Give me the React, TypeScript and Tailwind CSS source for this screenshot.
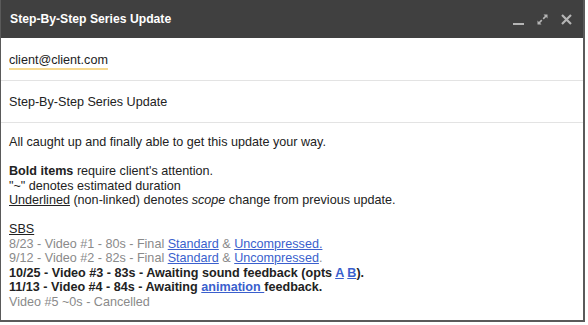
const Link = ({ children }: { children: React.ReactNode }) => (
  <a className="text-[#3a5fcd] underline">{children}</a>
);

const App = () => {
  return (
    <div className="w-[588px] h-[325px] bg-white font-['Liberation_Sans',Arial,sans-serif]">
      <div className="w-[585px] h-[322px] flex flex-col border-x-2 border-b-2 border-[#5a5a5a] border-l-[1.5px]">
        <div className="h-[38px] shrink-0 bg-[#404040] flex items-center justify-between pl-[9px] pr-[10px]">
          <span className="text-white font-bold text-[12.2px]">Step-By-Step Series Update</span>
          <div className="flex items-center gap-[11px] text-[#b5b5b5]">
            <svg width="13" height="13" viewBox="0 0 13 13">
              <rect x="1" y="10" width="11" height="2" fill="currentColor" />
            </svg>
            <svg width="13" height="13" viewBox="0 0 13 13" fill="currentColor">
              <path d="M7.5 1.5h4v4l-1.4-1.4-2.3 2.3-1.2-1.2 2.3-2.3z" />
              <path d="M5.5 11.5h-4v-4l1.4 1.4 2.3-2.3 1.2 1.2-2.3 2.3z" />
            </svg>
            <svg width="13" height="13" viewBox="0 0 13 13">
              <path d="M2 2l9 9M11 2l-9 9" stroke="currentColor" strokeWidth="2.2" />
            </svg>
          </div>
        </div>
        <div className="h-[43px] shrink-0 border-b border-[#e3e3e3] flex items-center pl-[8px] pt-[3px]">
          <span className="text-[12.6px] text-[#222] border-b-2 border-[#f6d98f] leading-[16px]">client@client.com</span>
        </div>
        <div className="h-[42px] shrink-0 border-b border-[#e3e3e3] flex items-center pl-[8px] pt-[1px]">
          <span className="text-[12.6px] text-[#222]">Step-By-Step Series Update</span>
        </div>
        <div className="pl-[8px] pt-[12px] text-[12.6px] leading-[14.5px] text-[#222]">
          <p>All caught up and finally able to get this update your way.</p>
          <p className="mt-[14.5px]">
            <b>Bold items</b> require client's attention.
          </p>
          <p>"~" denotes estimated duration</p>
          <p>
            <u>Underlined</u> (non-linked) denotes <i>scope</i> change from previous update.
          </p>
          <p className="mt-[14.5px]">
            <u>SBS</u>
          </p>
          <p className="text-[#8a8a8a]">
            8/23 - Video #1 - 80s - Final <Link>Standard</Link> &amp; <Link>Uncompressed.</Link>
          </p>
          <p className="text-[#8a8a8a]">
            9/12 - Video #2 - 82s - Final <Link>Standard</Link> &amp; <Link>Uncompressed</Link>.
          </p>
          <p className="font-bold">
            10/25 - Video #3 - 83s - Awaiting sound feedback (opts <Link>A</Link> <Link>B</Link>).
          </p>
          <p className="font-bold">
            11/13 - Video #4 - 84s - Awaiting <Link>animation </Link>feedback.
          </p>
          <p className="text-[#8a8a8a]">Video #5 ~0s - Cancelled</p>
        </div>
      </div>
    </div>
  );
};

export default App;
